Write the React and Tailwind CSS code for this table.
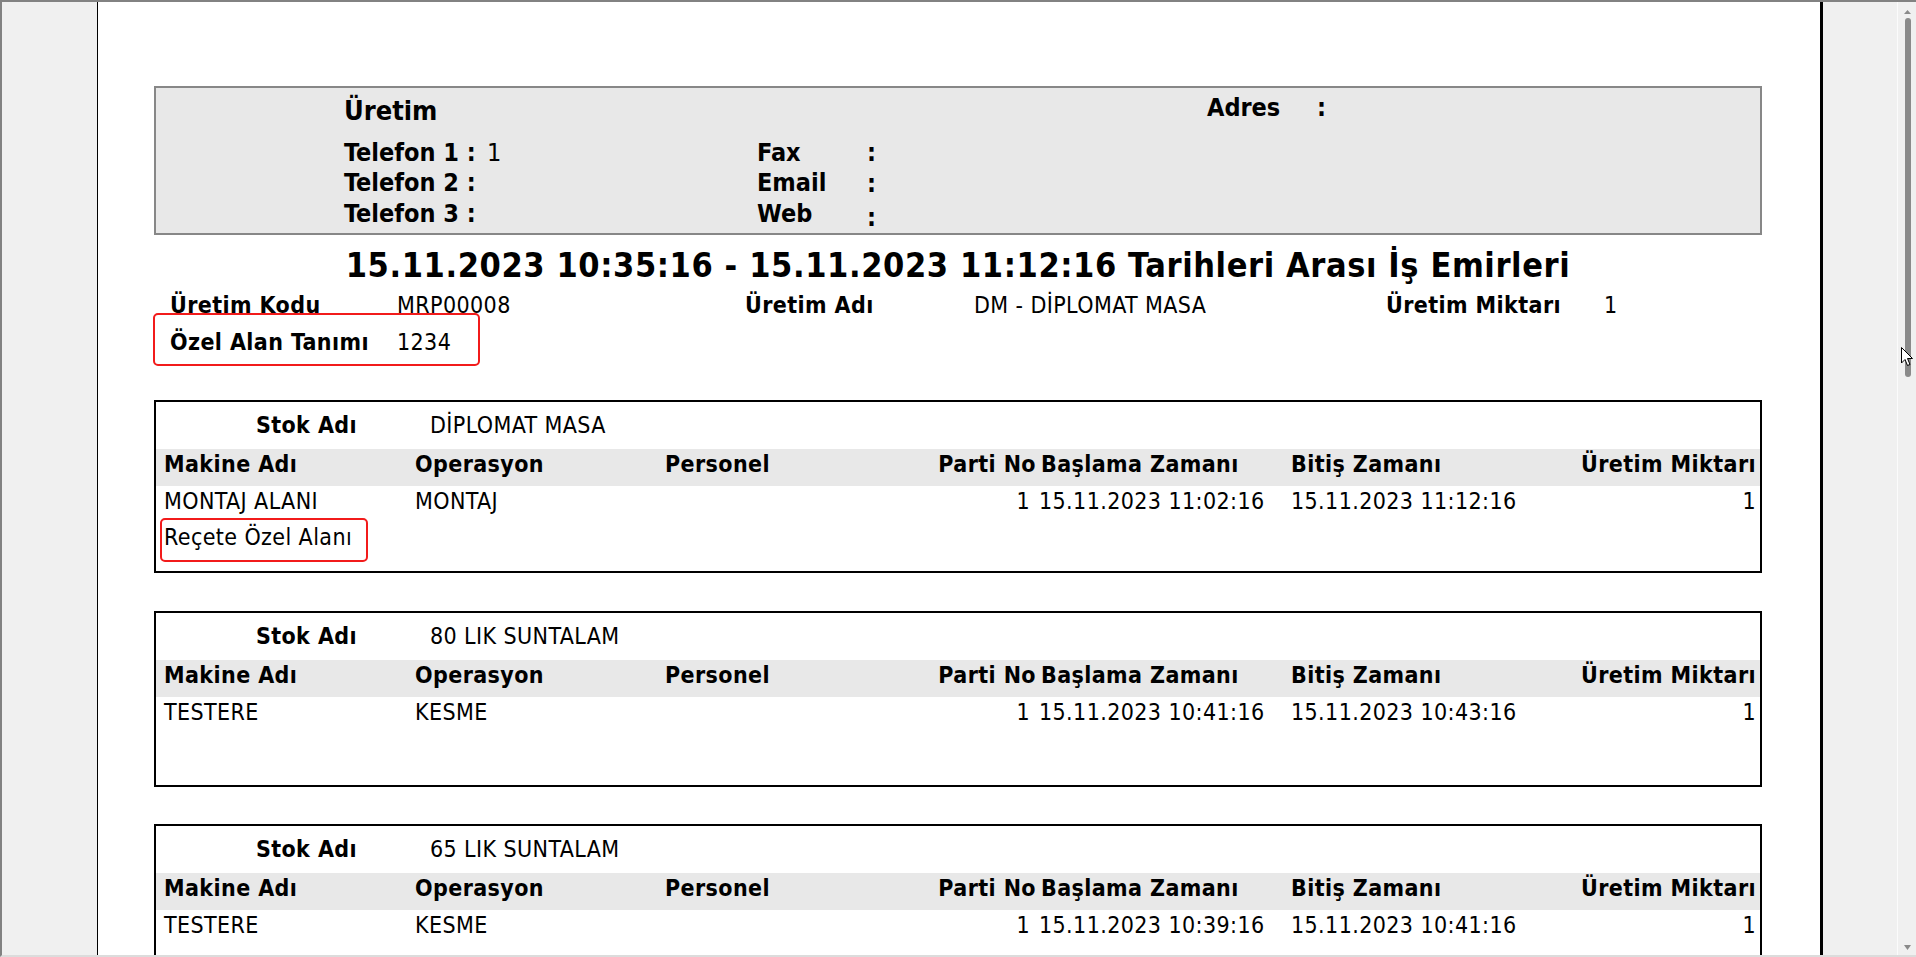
const font = "font-['DejaVu_Sans_Condensed','DejaVu_Sans',sans-serif]";

const sections = [
  {
    stok: 'DİPLOMAT MASA',
    makine: 'MONTAJ ALANI',
    operasyon: 'MONTAJ',
    parti: '1',
    baslama: '15.11.2023 11:02:16',
    bitis: '15.11.2023 11:12:16',
    miktar: '1',
    recete: true,
    box: 'h-[173px]',
  },
  {
    stok: '80 LIK SUNTALAM',
    makine: 'TESTERE',
    operasyon: 'KESME',
    parti: '1',
    baslama: '15.11.2023 10:41:16',
    bitis: '15.11.2023 10:43:16',
    miktar: '1',
    box: 'h-[176px] mt-[38px]',
  },
  {
    stok: '65 LIK SUNTALAM',
    makine: 'TESTERE',
    operasyon: 'KESME',
    parti: '1',
    baslama: '15.11.2023 10:39:16',
    bitis: '15.11.2023 10:41:16',
    miktar: '1',
    box: 'h-[176px] mt-[37px]',
  },
];

function HeaderRow({ label, value, label2, colonClass = '' }) {
  return (
    <div className="flex text-[25px] font-bold leading-[30px]">
      <div className="w-[188px] shrink-0" />
      <span className="w-[143px] shrink-0">{label}</span>
      <span className="w-[270px] shrink-0 font-normal">{value}</span>
      <span className="w-[110px] shrink-0">{label2}</span>
      <span className={colonClass}>:</span>
    </div>
  );
}

function Section({ s }) {
  return (
    <div className={`${s.box} shrink-0 border-2 border-black flex flex-col text-[23px] tracking-[0.4px]`}>
      <div className="flex leading-[47px] h-[47px]">
        <span className="w-[201px] text-right font-bold">Stok Adı</span>
        <span className="pl-[73px]">{s.stok}</span>
      </div>
      <div className="flex h-[37px] bg-[#e8e8e8] leading-[31px] font-bold pl-[8px] pr-[4px]">
        <span className="w-[251px] shrink-0">Makine Adı</span>
        <span className="w-[250px] shrink-0">Operasyon</span>
        <span className="w-[223px] shrink-0">Personel</span>
        <span className="w-[148px] shrink-0 text-right">Parti No</span>
        <span className="w-[255px] shrink-0 pl-[5px]">Başlama Zamanı</span>
        <span className="shrink-0">Bitiş Zamanı</span>
        <span className="flex-1 text-right">Üretim Miktarı</span>
      </div>
      <div className="flex leading-[31px] pl-[8px] pr-[4px]">
        <span className="w-[251px] shrink-0">{s.makine}</span>
        <span className="w-[250px] shrink-0">{s.operasyon}</span>
        <span className="w-[223px] shrink-0" />
        <span className="w-[142px] shrink-0 text-right">{s.parti}</span>
        <span className="w-[261px] shrink-0 pl-[9px]">{s.baslama}</span>
        <span className="shrink-0">{s.bitis}</span>
        <span className="flex-1 text-right">{s.miktar}</span>
      </div>
      {s.recete && (
        <div className="relative mt-[5px] leading-[31px] pl-[8px]">
          Reçete Özel Alanı
          <div className="absolute left-[4px] top-[-4px] w-[208px] h-[44px] border-2 border-[#f21b1b] rounded-[5px]" />
        </div>
      )}
    </div>
  );
}

export default function App() {
  return (
    <div className={`relative w-[1916px] h-[957px] overflow-hidden bg-[#f0f0f0] border-t-2 border-l-2 border-b-2 border-[#828282] border-b-[#dcdcdc] flex text-black ${font}`}>
      <div className="w-[95px] shrink-0" />

      <div className="w-[1726px] shrink-0 bg-white border-l border-r-[3px] border-black pl-[56px] pr-[58px] pt-[84px] flex flex-col">
        <div className="h-[149px] shrink-0 border-2 border-[#878787] bg-[#e8e8e8] pt-[7px]">
          <div className="flex items-start">
            <div className="w-[188px] shrink-0" />
            <div className="w-[863px] shrink-0 text-[27px] font-bold leading-[32px]">Üretim</div>
            <div className="flex text-[25px] font-bold leading-[26px]">
              <span className="w-[110px]">Adres</span>
              <span>:</span>
            </div>
          </div>
          <div className="mt-[11px]">
            <HeaderRow label="Telefon 1 :" value="1" label2="Fax" />
            <HeaderRow label="Telefon 2 :" value="" label2="Email" colonClass="mt-[1px]" />
            <HeaderRow label="Telefon 3 :" value="" label2="Web" colonClass="mt-[4px]" />
          </div>
        </div>

        <h1 className="mt-[9px] text-center text-[34px] tracking-[0.6px] font-bold leading-[42px]">
          15.11.2023 10:35:16 - 15.11.2023 11:12:16 Tarihleri Arası İş Emirleri
        </h1>

        <div className="mt-[1px] text-[23px] tracking-[0.4px] leading-[37px]">
          <div className="flex pl-[16px]">
            <span className="w-[227px] shrink-0 font-bold">Üretim Kodu</span>
            <span className="w-[348px] shrink-0">MRP00008</span>
            <span className="w-[229px] shrink-0 font-bold">Üretim Adı</span>
            <span className="w-[412px] shrink-0">DM - DİPLOMAT MASA</span>
            <span className="w-[218px] shrink-0 font-bold">Üretim Miktarı</span>
            <span>1</span>
          </div>
          <div className="relative flex pl-[16px]">
            <span className="w-[227px] shrink-0 font-bold">Özel Alan Tanımı</span>
            <span>1234</span>
            <div className="absolute left-[-1px] top-[-11px] w-[327px] h-[53px] border-2 border-[#f21b1b] rounded-[5px]" />
          </div>
        </div>

        <div className="mt-[39px] flex flex-col">
          {sections.map((s) => (
            <Section key={s.stok} s={s} />
          ))}
        </div>
      </div>

      <div className="w-[74px] shrink-0" />
      <div className="w-px shrink-0 bg-[#fbfbfb]" />

      {/* scrollbar */}
      <div className="w-[18px] shrink-0 relative flex flex-col items-center">
        <svg className="mt-[8px] ml-[1px]" width="7" height="4" viewBox="0 0 7 4">
          <path d="M3.5 0 L7 4 L0 4 Z" fill="#8a8a8a" />
        </svg>
        <div className="mt-[4px] ml-[1px] w-[6px] h-[359px] rounded-full bg-[#8a8a8a]" />
        <svg className="mt-auto mb-[5px] ml-[1px]" width="7" height="5" viewBox="0 0 7 5">
          <path d="M0 0 L7 0 L3.5 5 Z" fill="#8a8a8a" />
        </svg>
      </div>

      {/* mouse cursor */}
      <svg className="absolute left-[1899px] top-[345px]" width="13" height="20" viewBox="0 0 13 20">
        <path d="M0.5 0.5 L0.5 16 L4 12.5 L6.5 18.5 L9 17.5 L6.5 11.5 L11.5 11.5 Z" fill="white" stroke="black" strokeWidth="1" strokeLinejoin="miter" />
      </svg>
    </div>
  );
}
